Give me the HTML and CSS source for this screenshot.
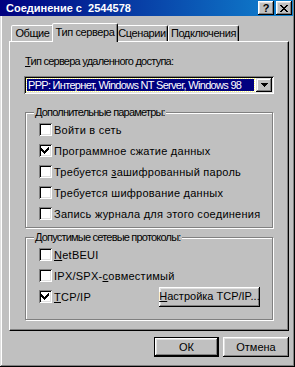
FILE: index.html
```html
<!DOCTYPE html>
<html lang="ru">
<head>
    <meta charset="UTF-8">
    <title>Соединение с 2544578</title>
    <link rel="stylesheet" href="styles.css">
</head>
<body>
<div class="window">
    <div class="titlebar">
        <span class="title">Соединение с&nbsp; 2544578</span>
        <div class="tbtns">
            <span class="tbtn help">?</span>
            <span class="tbtn">
                <svg width="8" height="7" viewBox="0 0 8 7" shape-rendering="crispEdges">
                    <path d="M0 0h2v1h1v1h2v-1h1v-1h2v1h-1v1h-1v1h-1v1h1v1h1v1h1v1h-2v-1h-1v-1h-2v1h-1v1h-2v-1h1v-1h1v-1h1v-1h-1v-1h-1v-1h-1z" fill="#000"/>
                </svg>
            </span>
        </div>
    </div>

    <div class="tabs">
        <div class="tab t1">Общие</div>
        <div class="tab t2 active">Тип сервера</div>
        <div class="tab t3">Сценарии</div>
        <div class="tab t4">Подключения</div>
    </div>

    <div class="panel">
        <div class="label"><u>Т</u>ип сервера удаленного доступа:</div>
        <div class="select">
            <div class="selected">PPP: Интернет, Windows NT Server, Windows 98</div>
            <div class="arrow">
                <svg width="7" height="4" viewBox="0 0 7 4" shape-rendering="crispEdges">
                    <path d="M0 0h7v1h-1v1h-1v1h-1v1h-1v-1h-1v-1h-1v-1h-1z" fill="#000"/>
                </svg>
            </div>
        </div>

        <fieldset class="group g1">
            <legend>Дополнительные параметры:</legend>
            <div class="row"><span class="cb"></span><span>Войти в сеть</span></div>
            <div class="row"><span class="cb checked"></span><span>Программное сжатие данных</span></div>
            <div class="row"><span class="cb"></span><span>Требуется <u>з</u>ашифрованный пароль</span></div>
            <div class="row"><span class="cb"></span><span>Требуется шифрование <u>д</u>анных</span></div>
            <div class="row"><span class="cb"></span><span>Запись журнала для этого соединения</span></div>
        </fieldset>

        <fieldset class="group g2">
            <legend>Допустимые сетевые протоколы:</legend>
            <div class="row"><span class="cb"></span><span><u>N</u>etBEUI</span></div>
            <div class="row"><span class="cb"></span><span>IPX/SPX-<u>с</u>овместимый</span></div>
            <div class="row split">
                <div class="row inner"><span class="cb checked"></span><span><u>T</u>CP/IP</span></div>
                <div class="btn wide"><u>Н</u>астройка TCP/IP...</div>
            </div>
        </fieldset>
    </div>

    <div class="buttons">
        <div class="btn default">ОК</div>
        <div class="btn">Отмена</div>
    </div>
</div>
</body>
</html>
```

FILE: styles.css
```css
body {
    margin: 0;
    padding: 0;
    background: #c0c0c0;
}
.window {
    width: 295px;
    height: 367px;
    background: #c0c0c0;
    font-family: "Liberation Sans", Arial, sans-serif;
    font-size: 11px;
    color: #000;
    box-sizing: border-box;
    box-shadow: inset -1px -1px #000, inset 1px 0 #dfdfdf, inset -2px -2px #808080, inset 2px 0 #fff;
    overflow: hidden;
}
.titlebar {
    height: 16px;
    margin-right: 2px;
    background: linear-gradient(to right, #000080, #1084d0);
    display: flex;
    align-items: center;
    justify-content: space-between;
    padding-left: 6px;
}
.title {
    color: #fff;
    font-weight: bold;
    font-size: 11px;
    line-height: 16px;
}
.tbtns {
    display: flex;
    gap: 2px;
    padding-right: 1px;
}
.tbtn {
    width: 16px;
    height: 14px;
    box-sizing: border-box;
    background: #c0c0c0;
    box-shadow: inset -1px -1px #000, inset 1px 1px #fff, inset -2px -2px #808080, inset 2px 2px #dfdfdf;
    display: flex;
    align-items: center;
    justify-content: center;
}
.help {
    font-weight: bold;
    font-size: 11px;
    line-height: 14px;
}

/* tab strip */
.tabs {
    display: flex;
    align-items: flex-end;
    height: 18px;
    margin-top: 7px;
    padding-left: 11px;
    position: relative;
    z-index: 2;
}
.tab {
    height: 15px;
    line-height: 14px;
    box-sizing: content-box;
    border: 1px solid;
    border-bottom: none;
    border-color: #fff #000 transparent #fff;
    border-radius: 2px 2px 0 0;
    box-shadow: inset -1px 0 #808080;
    background: #c0c0c0;
    text-align: center;
    letter-spacing: -0.4px;
    white-space: nowrap;
}
.t1 { width: 41px; }
.t2 { width: 60px; }
.t3 { width: 50px; }
.t4 { width: 69px; }
.tab.active {
    width: 64px;
    height: 18px;
    line-height: 16px;
    margin: 0 -2px -1px;
    position: relative;
    z-index: 3;
}

/* tab page */
.panel {
    height: 290px;
    margin: 0 6px 0 9px;
    box-sizing: border-box;
    border: 1px solid;
    border-color: #fff #000 #000 #fff;
    box-shadow: inset -1px -1px #808080;
    padding: 13px 0 0 15px;
}
.label {
    line-height: 13px;
    height: 13px;
    letter-spacing: -0.75px;
}
.select {
    width: 250px;
    height: 18px;
    margin: 8px 0 0 -1px;
    box-sizing: border-box;
    background: #fff;
    box-shadow: inset 1px 1px #808080, inset -1px -1px #fff, inset 2px 2px #000, inset -2px -2px #dfdfdf;
    display: flex;
    align-items: center;
    padding: 2px 2px 2px 3px;
}
.selected {
    flex: 1;
    height: 12px;
    line-height: 12px;
    background: #000080;
    color: #fff;
    outline: 1px dotted #ffff80;
    padding-left: 1px;
    white-space: nowrap;
    overflow: hidden;
    margin-right: 2px;
    letter-spacing: -0.7px;
}
.arrow {
    width: 16px;
    height: 14px;
    box-sizing: border-box;
    background: #c0c0c0;
    box-shadow: inset -1px -1px #000, inset 1px 1px #dfdfdf, inset -2px -2px #808080, inset 2px 2px #fff;
    display: flex;
    align-items: center;
    justify-content: center;
}

/* group boxes */
.group {
    margin: 0;
    width: 248px;
    box-sizing: border-box;
    border: 1px solid #808080;
    box-shadow: inset 1px 1px #fff, 1px 1px #fff;
    padding: 0 0 0 13px;
}
.group legend {
    padding: 0 1px;
    margin-left: -5px;
    line-height: 13px;
    background: #c0c0c0;
    letter-spacing: -0.8px;
}
.g1 {
    margin-top: 12px;
    height: 122px;
}
.g2 {
    margin-top: 3px;
    height: 89px;
}
.row {
    display: flex;
    align-items: center;
    height: 21px;
    gap: 2px;
    letter-spacing: 0.25px;
}
.row.split {
    justify-content: space-between;
    padding-right: 12px;
}
.row.inner {
    padding: 0;
}
.cb {
    width: 13px;
    height: 13px;
    flex: none;
    box-sizing: border-box;
    background: #fff;
    box-shadow: inset 1px 1px #808080, inset -1px -1px #fff, inset 2px 2px #000, inset -2px -2px #dfdfdf;
    display: inline-block;
}
.cb.checked {
    background: #fff url("data:image/svg+xml,%3Csvg xmlns='http://www.w3.org/2000/svg' width='13' height='13' shape-rendering='crispEdges'%3E%3Cpath d='M9 3h1v3h-1v1h-1v1h-1v1h-1v1h-1v-1h-1v-1h-1v-1h-1v-3h1v1h1v1h1v1h1v-1h1v-1h1v-1h1z' fill='%23000'/%3E%3C/svg%3E") no-repeat;
}

/* push buttons */
.btn {
    height: 20px;
    width: 66px;
    box-sizing: border-box;
    background: #c0c0c0;
    box-shadow: inset -1px -1px #000, inset 1px 1px #fff, inset -2px -2px #808080, inset 2px 2px #dfdfdf;
    display: flex;
    align-items: center;
    justify-content: center;
    line-height: 13px;
    letter-spacing: 0;
}
.btn.wide {
    width: 101px;
}
.btn.default {
    width: 65px;
    border: 1px solid #000;
}
.buttons {
    display: flex;
    justify-content: flex-end;
    gap: 4px;
    margin: 6px 6px 0 0;
}
```
